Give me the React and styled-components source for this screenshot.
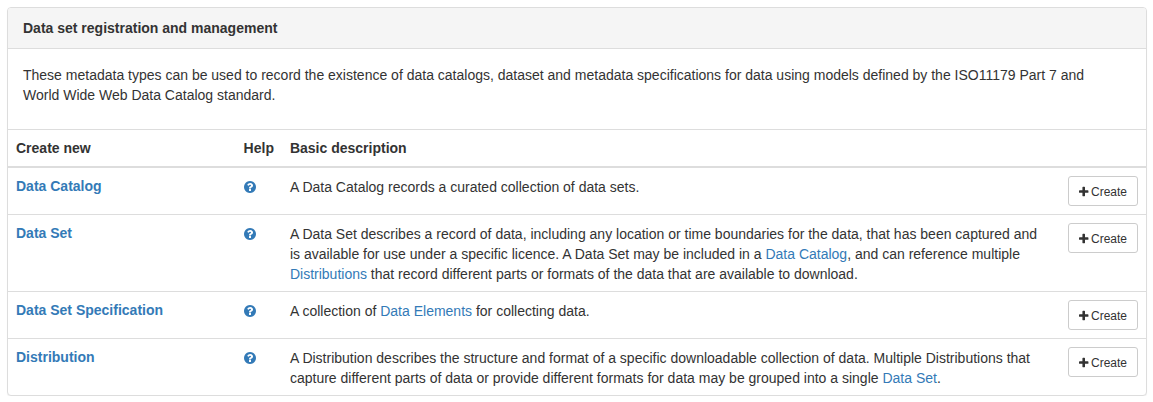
import React from 'react'
import styled, { createGlobalStyle } from "styled-components";

const HelpIcon = () => (
    <svg width="12" height="12" viewBox="128 128 1536 1536" fill="currentColor" aria-hidden="true">
        <path d="M1024 1376v-192q0-14-9-23t-23-9h-192q-14 0-23 9t-9 23v192q0 14 9 23t23 9h192q14 0 23-9t9-23zm256-672q0-88-55.5-163t-138.5-116-170-41q-243 0-371 213-15 24 8 42l132 100q7 6 19 6 16 0 25-12 53-68 86-92 34-24 86-24 48 0 85.5 26t37.5 59q0 38-20 61t-68 45q-63 28-115.5 86.5t-52.5 125.5v36q0 14 9 23t23 9h192q14 0 23-9t9-23q0-19 21.5-49.5t54.5-49.5q32-18 49-28.5t46-35 44.5-48 28-60.5 12.5-81zm384 192q0 209-103 385.5t-279.5 279.5-385.5 103-385.5-103-279.5-279.5-103-385.5 103-385.5 279.5-279.5 385.5-103 385.5 103 279.5 279.5 103 385.5z" />
    </svg>
)

const PlusIcon = () => (
    <svg width="10" height="12" viewBox="192 0 1493 1792" fill="currentColor" aria-hidden="true">
        <path d="M1600 736v192q0 40-28 68t-68 28h-416v416q0 40-28 68t-68 28h-192q-40 0-68-28t-28-68v-416h-416q-40 0-68-28t-28-68v-192q0-40 28-68t68-28h416v-416q0-40 28-68t68-28h192q40 0 68 28t28 68v416h416q40 0 68 28t28 68z" />
    </svg>
)

const App = () => {
    return (
        <>
        <GlobalStyle />
        <Panel>
            <PanelHeading>Data set registration and management</PanelHeading>
            <PanelBody>
                <Intro>
                    These metadata types can be used to record the existence of data catalogs, dataset and metadata
                    specifications for data using models defined by the ISO11179 Part 7 and World Wide Web Data
                    Catalog standard.
                </Intro>
            </PanelBody>
            <Table>
                <thead>
                    <tr>
                        <HeadCell $width="20%">Create new</HeadCell>
                        <HeadCell>Help</HeadCell>
                        <HeadCell colSpan={2}>Basic description</HeadCell>
                    </tr>
                </thead>
                <tbody>
                    {rows.map((row) => (
                        <Row key={row.name}>
                            <Cell><NameLink href="#">{row.name}</NameLink></Cell>
                            <Cell>
                                <HelpLink href="#" aria-label={`Help for ${row.name}`}><HelpIcon /></HelpLink>
                            </Cell>
                            <DescriptionCell>{row.text}</DescriptionCell>
                            <Cell>
                                <CreateButton type="button"><PlusIcon />Create</CreateButton>
                            </Cell>
                        </Row>
                    ))}
                </tbody>
            </Table>
        </Panel>
        </>
    )
}

const GlobalStyle = createGlobalStyle`
* {
    box-sizing: border-box;
}

body {
    margin: 0;
    padding: 7px 6px 0 7px;
    background: #fff;
    color: #333;
    font-family: "Helvetica Neue", Helvetica, "Liberation Sans", Arial, sans-serif;
    font-size: 14px;
    line-height: 20px;
}
`;

const Panel = styled.section`
border: 1px solid #ddd;
border-radius: 4px;
background: #fff;
box-shadow: 0 1px 1px rgba(0, 0, 0, 0.05);
`;
const PanelHeading = styled.h1`
margin: 0;
padding: 10px 15px;
border-bottom: 1px solid #ddd;
border-radius: 3px 3px 0 0;
background: #f5f5f5;
font-size: 14px;
font-weight: 700;
`;
const PanelBody = styled.div`
padding: 16px 30px 14px 15px;
`;
const Intro = styled.p`
margin: 0 0 10px;
`;
const Table = styled.table`
width: 100%;
border-top: 1px solid #ddd;
border-collapse: separate;
border-spacing: 0;
`;
const HeadCell = styled.th`
width: ${(props) => props.$width || "auto"};
padding: 8px;
border-bottom: 2px solid #ddd;
text-align: left;
vertical-align: bottom;
`;
const Cell = styled.td`
padding: 8px;
vertical-align: top;
`;
const DescriptionCell = styled(Cell)`
padding: 9px 16px 7px 8px;
`;
const Row = styled.tr`
& + & > td {
    border-top: 1px solid #ddd;
}
`;
const Link = styled.a`
color: #337ab7;
text-decoration: none;

&:hover {
    color: #23527c;
    text-decoration: underline;
}
`;
const NameLink = styled(Link)`
font-weight: 700;
`;
const HelpLink = styled(Link)`
display: flex;
align-items: center;
height: 22px;
`;
const CreateButton = styled.button`
display: flex;
align-items: center;
gap: 2px;
padding: 6px 10px 4px;
border: 1px solid #ccc;
border-radius: 3px;
background: #fff;
color: #333;
font-family: inherit;
font-size: 12px;
line-height: 18px;
cursor: pointer;

&:hover {
    background: #e6e6e6;
}
`;

const rows = [
    {
        name: "Data Catalog",
        text: <>A Data Catalog records a curated collection of data sets.</>,
    },
    {
        name: "Data Set",
        text: (
            <>
                A Data Set describes a record of data, including any location or time boundaries for the data, that
                has been captured and is available for use under a specific licence. A Data Set may be included in
                a <Link href="#">Data Catalog</Link>, and can reference multiple <Link href="#">Distributions</Link> that
                record different parts or formats of the data that are available to download.
            </>
        ),
    },
    {
        name: "Data Set Specification",
        text: <>A collection of <Link href="#">Data Elements</Link> for collecting data.</>,
    },
    {
        name: "Distribution",
        text: (
            <>
                A Distribution describes the structure and format of a specific downloadable collection of data.
                Multiple Distributions that capture different parts of data or provide different formats for data may
                be grouped into a single <Link href="#">Data Set</Link>.
            </>
        ),
    },
];

export default App;
